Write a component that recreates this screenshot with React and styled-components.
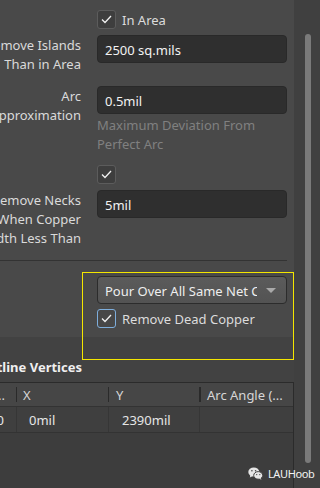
import React from "react";
import styled, { createGlobalStyle } from "styled-components";

const GlobalStyle = createGlobalStyle`
  html, body {
    margin: 0;
    padding: 0;
    background: #494949;
  }
  * {
    box-sizing: border-box;
  }
`;

const Page = styled.div`
  position: relative;
  width: 320px;
  height: 488px;
  overflow: hidden;
  display: flex;
  font-family: "Noto Sans", "Liberation Sans", sans-serif;
  font-size: 13px;
  color: #dcdcdc;
`;

const Main = styled.div`
  width: 294px;
  display: flex;
  flex-direction: column;
  flex-shrink: 0;
`;

const FormSection = styled.div`
  background: #494949;
  padding: 10px 7px 0 0;
`;

const Row = styled.div`
  display: flex;
  gap: 16px;
  margin-top: ${(p) => p.$mt || 0}px;
`;

const Label = styled.div`
  width: 81px;
  flex-shrink: 0;
  display: flex;
  flex-direction: column;
  align-items: flex-end;
  padding-top: 1px;
  line-height: 19px;
  white-space: nowrap;
  color: #dadada;
`;

const Field = styled.div`
  width: 190px;
  display: flex;
  flex-direction: column;
`;

const Input = styled.div`
  height: 28px;
  display: flex;
  align-items: center;
  padding: 1px 0 0 7px;
  background: #2f2f2f;
  border: 1px solid #292929;
  border-radius: 4px;
  color: #f2f2f2;
`;

const Hint = styled.div`
  line-height: 19px;
  color: #808080;
  padding-top: 2px;
`;

const CheckRow = styled.label`
  display: flex;
  align-items: center;
  gap: 6px;
  height: 19px;
  color: #dcdcdc;
`;

const CheckText = styled.span`
  padding-top: 1px;
`;

const Box = styled.span`
  width: 19px;
  height: 19px;
  border-radius: 3px;
  display: flex;
  align-items: center;
  justify-content: center;
  background: ${(p) => (p.$focus ? "#474747" : "#3e3e3e")};
  border: 1px solid ${(p) => (p.$focus ? "#7eaedc" : "#5c5c5c")};
`;

const Divider = styled.div`
  height: 1px;
  margin: 12px 7px 0 0;
  background: #333333;
`;

const PourSection = styled.div`
  background: #494949;
  padding: 15px 7px 9px 97px;
  display: flex;
  flex-direction: column;
  gap: 5px;
`;

const Select = styled.div`
  height: 28px;
  display: flex;
  align-items: center;
  background: linear-gradient(#5b5b5b, #535353);
  border: 1px solid #2c2c2c;
  border-radius: 4px;
  color: #eeeeee;
`;

const SelectText = styled.span`
  flex: 1;
  overflow: hidden;
  white-space: nowrap;
  padding: 1px 0 0 7px;
`;

const Arrow = styled.span`
  width: 29px;
  display: flex;
  justify-content: center;
  padding-right: 2px;
`;

const Highlight = styled.div`
  position: absolute;
  left: 82px;
  top: 272px;
  width: 212px;
  height: 88px;
  border: 1px solid #f4e600;
  pointer-events: none;
`;

const VerticesSection = styled.div`
  flex: 1;
  background: #424242;
  display: flex;
  flex-direction: column;
`;

const Title = styled.div`
  width: 82px;
  height: 45px;
  display: flex;
  justify-content: flex-end;
  align-items: flex-end;
  padding-bottom: 6px;
  white-space: nowrap;
  font-weight: 700;
  color: #f0f0f0;
`;

const Table = styled.div`
  flex: 1;
  background: #3d3d3d;
  border-top: 1px solid #2b2b2b;
  border-right: 1px solid #2b2b2b;
`;

const TRow = styled.div`
  display: grid;
  grid-template-columns: 16px 92px 91px 1fr;
  height: ${(p) => (p.$head ? 24 : 26)}px;
  background: ${(p) => (p.$head ? "#464646" : "#3f3f3f")};
  border-bottom: 1px solid #333333;
`;

const Cell = styled.div`
  display: flex;
  align-items: center;
  white-space: nowrap;
  overflow: hidden;
  justify-content: ${(p) => (p.$end ? "flex-end" : "flex-start")};
  padding-left: ${(p) => p.$pl || 0}px;
  padding-right: ${(p) => p.$pr || 0}px;
  color: ${(p) => (p.$head ? "#d6d6d6" : "#e6e6e6")};
  position: relative;
  border-left: ${(p) => (p.$sepLine ? "1px solid #363636" : "none")};
`;

const HeadSep = styled.span`
  position: absolute;
  left: 0;
  top: 4px;
  bottom: 4px;
  width: ${(p) => (p.$wide ? 2 : 1)}px;
  background: #2a2a2a;
`;

const ScrollTrack = styled.div`
  flex: 1;
  background: #404040;
  display: flex;
  justify-content: center;
  padding: 34px 0 25px 2px;
`;

const Thumb = styled.div`
  width: 6px;
  border-radius: 3px;
  background: #7a7a7a;
`;

const Watermark = styled.div`
  position: absolute;
  left: 248px;
  top: 466px;
  display: flex;
  align-items: center;
  gap: 5px;
  color: #f2f2f2;
  font-size: 11px;
  letter-spacing: -0.4px;
`;

function Check() {
  return (
    <svg width="11" height="9" viewBox="0 0 11 9">
      <path d="M1 4.5 L4 7.5 L10 1" fill="none" stroke="#f0f0f0" strokeWidth="1.3" />
    </svg>
  );
}

function WeChat() {
  return (
    <svg width="15" height="13" viewBox="0 0 15 13">
      <ellipse cx="5.8" cy="5" rx="5.5" ry="4.6" fill="#e6e6e6" />
      <path d="M2.5 8 L1.8 10.4 L4.8 9 Z" fill="#e6e6e6" />
      <ellipse cx="10.2" cy="8.4" rx="4.5" ry="3.8" fill="#e6e6e6" stroke="#424242" strokeWidth="1" />
      <path d="M12.5 11 L13.5 12.8 L10.8 11.6 Z" fill="#e6e6e6" />
      <circle cx="3.9" cy="3.8" r="0.8" fill="#424242" />
      <circle cx="7.6" cy="3.8" r="0.8" fill="#424242" />
      <circle cx="8.7" cy="7.6" r="0.65" fill="#424242" />
      <circle cx="11.8" cy="7.6" r="0.65" fill="#424242" />
    </svg>
  );
}

function CheckBox({ label, focus }) {
  return (
    <CheckRow>
      <Box $focus={focus}>
        <Check />
      </Box>
      {label && <CheckText>{label}</CheckText>}
    </CheckRow>
  );
}

export default function App() {
  return (
    <>
      <GlobalStyle />
      <Page>
        <Main>
          <FormSection>
            <Row>
              <Label />
              <Field>
                <CheckBox label="In Area" />
              </Field>
            </Row>
            <Row $mt={6}>
              <Label>
                <span>Remove Islands</span>
                <span>Than in Area</span>
              </Label>
              <Field>
                <Input>2500 sq.mils</Input>
              </Field>
            </Row>
            <Row $mt={12}>
              <Label>
                <span>Arc</span>
                <span>Approximation</span>
              </Label>
              <Field>
                <Input>0.5mil</Input>
                <Hint>
                  Maximum Deviation From
                  <br />
                  Perfect Arc
                </Hint>
              </Field>
            </Row>
            <Row $mt={11}>
              <Label />
              <Field>
                <CheckBox />
              </Field>
            </Row>
            <Row $mt={6}>
              <Label>
                <span>Remove Necks</span>
                <span>When Copper</span>
                <span>Width Less Than</span>
              </Label>
              <Field>
                <Input>5mil</Input>
              </Field>
            </Row>
          </FormSection>
          <Divider />
          <PourSection>
            <Select>
              <SelectText>Pour Over All Same Net Copper</SelectText>
              <Arrow>
                <svg width="10" height="5" viewBox="0 0 10 5">
                  <path d="M0 0 H10 L5 5 Z" fill="#a9a9a9" />
                </svg>
              </Arrow>
            </Select>
            <CheckBox label="Remove Dead Copper" focus />
          </PourSection>
          <VerticesSection>
            <Title>Outline Vertices</Title>
            <Table>
              <TRow $head>
                <Cell $head $end $pr={11}>Ind...</Cell>
                <Cell $head $pl={7}>
                  <HeadSep />X
                </Cell>
                <Cell $head $pl={8}>
                  <HeadSep />Y
                </Cell>
                <Cell $head $pl={8}>
                  <HeadSep $wide />Arc Angle (...
                </Cell>
              </TRow>
              <TRow>
                <Cell $end $pr={12}>0</Cell>
                <Cell $pl={12} $sepLine>0mil</Cell>
                <Cell $pl={13} $sepLine>2390mil</Cell>
                <Cell $sepLine />
              </TRow>
            </Table>
          </VerticesSection>
        </Main>
        <ScrollTrack>
          <Thumb />
        </ScrollTrack>
        <Highlight />
        <Watermark>
          <WeChat />
          <span>LAUHoob</span>
        </Watermark>
      </Page>
    </>
  );
}
